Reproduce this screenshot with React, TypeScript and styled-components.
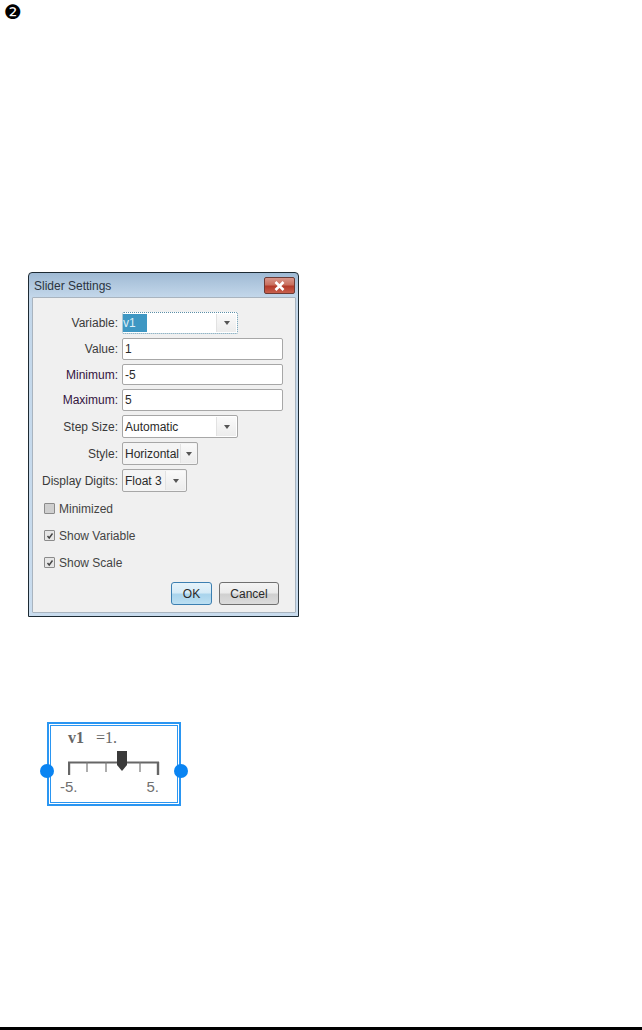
import React from 'react';
import styled, { createGlobalStyle } from 'styled-components';

const GlobalStyle = createGlobalStyle`
  html, body {
    margin: 0;
    padding: 0;
    background: #fff;
  }
`;

const Page = styled.div`
  width: 642px;
  height: 1030px;
  display: flex;
  flex-direction: column;
  overflow: hidden;
  background: #fff;
  font-family: 'Liberation Sans', Arial, sans-serif;
`;

const Badge = styled.div`
  height: 20px;
  padding-left: 4px;
  font-family: 'DejaVu Sans', sans-serif;
  font-size: 20px;
  line-height: 24px;
  color: #000;
`;

const Dialog = styled.div`
  width: 271px;
  height: 345px;
  box-sizing: border-box;
  margin: 252px 0 0 28px;
  display: flex;
  flex-direction: column;
  border: 1px solid #1d2a33;
  border-radius: 4px 4px 0 0;
  background: linear-gradient(180deg, #9fbad4 0%, #c3d7ea 7%, #c9dcee 100%);
`;

const TitleBar = styled.div`
  height: 24px;
  flex: none;
  display: flex;
  align-items: flex-start;
  justify-content: space-between;
  padding: 4px 3px 0 5px;
  box-sizing: border-box;
`;

const Title = styled.span`
  font-size: 12px;
  line-height: 19px;
  color: #2b3440;
`;

const CloseButton = styled.div`
  width: 31px;
  height: 17px;
  box-sizing: border-box;
  display: flex;
  align-items: center;
  justify-content: center;
  border: 1px solid #6b3b36;
  border-radius: 2px;
  background: linear-gradient(180deg, #d9968b 0%, #c9705f 45%, #b33a2a 55%, #c8604d 100%);
`;

const Body = styled.div`
  flex: 1;
  margin: 0 2px 3px 3px;
  padding: 14px 0 0 0;
  background: #f0f0f0;
  border: 1px solid #a9b4bf;
  border-radius: 1px;
  display: flex;
  flex-direction: column;
`;

const Form = styled.div`
  display: flex;
  flex-direction: column;
  gap: 4px;
`;

const Row = styled.div<{ $h: number }>`
  height: ${(p) => p.$h}px;
  display: grid;
  grid-template-columns: 85px auto;
  justify-content: start;
  column-gap: 4px;
  align-items: stretch;
`;

const Label = styled.label<{ $tone?: string }>`
  align-self: center;
  text-align: right;
  font-size: 12px;
  line-height: 14px;
  white-space: nowrap;
  color: ${(p) => p.$tone || '#3a3a3a'};
`;

const TextField = styled.div`
  width: 161px;
  box-sizing: border-box;
  padding-left: 2px;
  display: flex;
  align-items: center;
  font-size: 12px;
  color: #2a2a2a;
  background: #fff;
  border: 1px solid #a7a7a7;
  border-radius: 2px;
`;

const Select = styled.div<{ $w: number; $focus?: boolean; $plain?: boolean }>`
  width: ${(p) => p.$w}px;
  box-sizing: border-box;
  display: flex;
  align-items: stretch;
  justify-content: space-between;
  font-size: 12px;
  color: #2a2a2a;
  background: ${(p) => (p.$plain ? '#f4f4f4' : '#fff')};
  border: 1px ${(p) => (p.$focus ? 'dotted #5b8fa8' : 'solid #a7a7a7')};
  border-radius: 2px;
`;

const SelectValue = styled.span`
  padding-left: 2px;
  align-self: center;
  white-space: nowrap;
`;

const Selected = styled.span`
  align-self: center;
  width: 24px;
  height: 18px;
  line-height: 18px;
  color: #dfeef6;
  background: #3e97c3;
`;

const Arrow = styled.div`
  width: 19px;
  display: flex;
  align-items: center;
  justify-content: center;
  margin: 1px;
  background: linear-gradient(180deg, #fafafa, #ececec);
  border-left: 1px solid #e2e2e2;

  &::after {
    content: '';
    border-left: 3.5px solid transparent;
    border-right: 3.5px solid transparent;
    border-top: 4px solid #555;
  }
`;

const Checks = styled.div`
  margin-top: 3px;
  display: flex;
  flex-direction: column;
`;

const CheckRow = styled.div`
  height: 27px;
  padding-left: 11px;
  display: flex;
  align-items: center;
  gap: 4px;
  font-size: 12px;
  color: #444;
`;

const CheckBox = styled.span<{ $off?: boolean }>`
  width: 11px;
  height: 11px;
  box-sizing: border-box;
  display: flex;
  align-items: center;
  justify-content: center;
  border: 1px solid #8b8b8b;
  border-radius: 1px;
  background: ${(p) => (p.$off ? '#cfcfcf' : '#e6e6e6')};
`;

const Buttons = styled.div`
  margin-top: 6px;
  padding-right: 16px;
  display: flex;
  justify-content: flex-end;
  gap: 7px;
`;

const Button = styled.div<{ $w: number; $primary?: boolean }>`
  width: ${(p) => p.$w}px;
  height: 23px;
  box-sizing: border-box;
  display: flex;
  align-items: center;
  justify-content: center;
  font-size: 12px;
  color: #2a2a2a;
  border: 1px solid ${(p) => (p.$primary ? '#3c7fb1' : '#707070')};
  border-radius: 3px;
  background: ${(p) =>
    p.$primary
      ? 'linear-gradient(180deg, #e6f3fa 0%, #d6ebf7 45%, #a9d4ec 55%, #bcdff2 100%)'
      : 'linear-gradient(180deg, #f4f4f4 0%, #ebebeb 45%, #d0d0d0 55%, #dcdcdc 100%)'};
`;

const Widget = styled.div`
  position: relative;
  width: 134px;
  height: 84px;
  box-sizing: border-box;
  margin: 105px 0 0 47px;
  padding: 6px 0 0 19px;
  border: 2px solid #2a96f2;
  box-shadow: inset 0 0 0 1px #fff, inset 0 0 0 2px #2a96f2;
  background: #fff;
`;

const Readout = styled.div`
  display: flex;
  gap: 12px;
  height: 16px;
  align-items: center;
  font-family: 'Liberation Serif', serif;
  font-size: 16px;
  color: #666;
`;

const VarName = styled.span`
  font-weight: 700;
`;

const Scale = styled.svg`
  display: block;
  margin: 5px 0 0 0;
`;

const Ends = styled.div`
  display: flex;
  justify-content: space-between;
  width: 99px;
  margin: 1px 0 0 -8px;
  font-family: 'Liberation Sans', sans-serif;
  font-size: 15px;
  line-height: 18px;
  color: #707070;
`;

const Handle = styled.span<{ $side: 'left' | 'right' }>`
  position: absolute;
  top: 40px;
  ${(p) => p.$side}: -9px;
  width: 14px;
  height: 14px;
  border-radius: 50%;
  background: #0a84f2;
`;

const Footer = styled.div`
  margin-top: auto;
  height: 3px;
  background: #000;
`;

const Tick = () => (
  <svg width="8" height="8" viewBox="0 0 8 8">
    <path d="M1.5 4 L3.2 6 L6.5 1.5" fill="none" stroke="#444" strokeWidth="1.4" />
  </svg>
);

const App = () => (
  <>
    <GlobalStyle />
    <Page>
      <Badge>❷</Badge>
      <Dialog>
        <TitleBar>
          <Title>Slider Settings</Title>
          <CloseButton>
            <svg width="11" height="10" viewBox="0 0 11 10">
              <path d="M1.5 1 L9.5 9 M9.5 1 L1.5 9" stroke="#fff" strokeWidth="2.6" />
            </svg>
          </CloseButton>
        </TitleBar>
        <Body>
          <Form>
            <Row $h={22}>
              <Label>Variable:</Label>
              <Select $w={116} $focus>
                <Selected>v1</Selected>
                <Arrow />
              </Select>
            </Row>
            <Row $h={22}>
              <Label>Value:</Label>
              <TextField>1</TextField>
            </Row>
            <Row $h={21}>
              <Label $tone="#33143f">Minimum:</Label>
              <TextField>-5</TextField>
            </Row>
            <Row $h={22}>
              <Label $tone="#33143f">Maximum:</Label>
              <TextField>5</TextField>
            </Row>
            <Row $h={23}>
              <Label>Step Size:</Label>
              <Select $w={116}>
                <SelectValue>Automatic</SelectValue>
                <Arrow />
              </Select>
            </Row>
            <Row $h={23}>
              <Label>Style:</Label>
              <Select $w={76} $plain>
                <SelectValue>Horizontal</SelectValue>
                <Arrow />
              </Select>
            </Row>
            <Row $h={23}>
              <Label>Display Digits:</Label>
              <Select $w={65} $plain>
                <SelectValue>Float 3</SelectValue>
                <Arrow />
              </Select>
            </Row>
          </Form>
          <Checks>
            <CheckRow>
              <CheckBox $off />
              Minimized
            </CheckRow>
            <CheckRow>
              <CheckBox>
                <Tick />
              </CheckBox>
              Show Variable
            </CheckRow>
            <CheckRow>
              <CheckBox>
                <Tick />
              </CheckBox>
              Show Scale
            </CheckRow>
          </Checks>
          <Buttons>
            <Button $w={41} $primary>
              OK
            </Button>
            <Button $w={60}>Cancel</Button>
          </Buttons>
        </Body>
      </Dialog>
      <Widget>
        <Readout>
          <VarName>v1</VarName>
          <span>=1.</span>
        </Readout>
        <Scale width="92" height="26" viewBox="0 0 92 26">
          <path d="M0 11.5 H91" stroke="#666" strokeWidth="2.2" />
          <path d="M1 11 V24 M90 11 V24" stroke="#666" strokeWidth="2.4" />
          <path d="M19 11 V21 M38 11 V21 M72 11 V21" stroke="#777" strokeWidth="1.2" />
          <path d="M49 0 H59 V14 L54 20 L49 14 Z" fill="#3a3a3a" />
        </Scale>
        <Ends>
          <span>-5.</span>
          <span>5.</span>
        </Ends>
        <Handle $side="left" />
        <Handle $side="right" />
      </Widget>
      <Footer />
    </Page>
  </>
);

export default App;
